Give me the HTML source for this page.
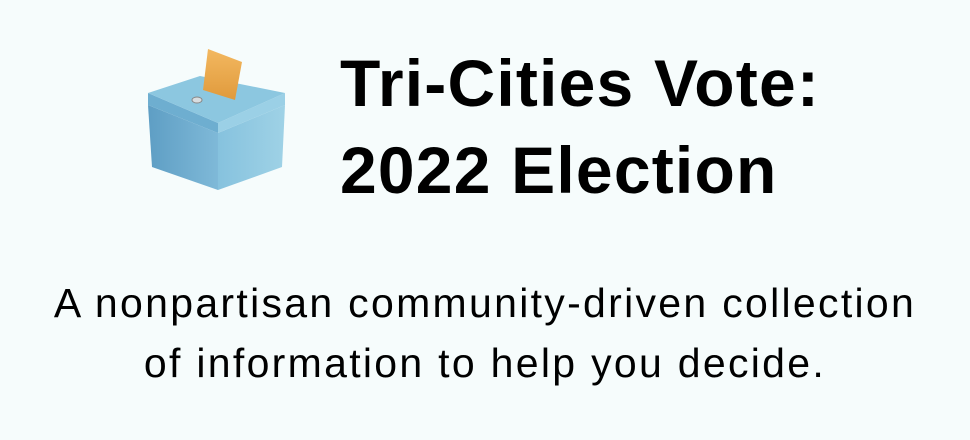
<!DOCTYPE html><html><head><style>
body{margin:0;width:970px;height:440px;background:#f6fcfc;overflow:hidden;font-family:"Liberation Sans",sans-serif;color:#000}
.t{position:absolute;left:340px;font-weight:bold;font-size:66px;line-height:1;letter-spacing:1.2px;white-space:nowrap}
.s{position:absolute;left:0;width:970px;text-align:center;font-size:41px;line-height:1;letter-spacing:2.3px;white-space:nowrap}
</style></head><body>
<svg style="position:absolute;left:0;top:0" width="320" height="220">
<defs>
<linearGradient id="f" x1="0" x2="1"><stop offset="0" stop-color="#5e9ec4"/><stop offset="1" stop-color="#7fb9d8"/></linearGradient>
<linearGradient id="r" x1="0" x2="1"><stop offset="0" stop-color="#86c2de"/><stop offset="1" stop-color="#9fd2e6"/></linearGradient>
<linearGradient id="p" x1="0" y1="0" x2="0" y2="1"><stop offset="0" stop-color="#f3b860"/><stop offset="1" stop-color="#e09a3c"/></linearGradient>
</defs>
<polygon points="148,105 218,133 218,190 152,167" fill="url(#f)"/>
<polygon points="218,133 285,105 282,167 218,190" fill="url(#r)"/>
<polygon points="148,93 218,123 218,133 148,105" fill="#6eaed0"/>
<polygon points="218,123 285,93 285,105 218,133" fill="#9bd0e6"/>
<polygon points="148,93 200,76 285,93 218,123" fill="#8cc7e0"/>
<polygon points="208,49 242,62 235,100 203,90" fill="url(#p)"/>
<ellipse cx="197" cy="100" rx="5" ry="3" fill="#d8dde0" stroke="#888" stroke-width="1"/>
</svg>
<div class="t" style="top:50px">Tri-Cities Vote:</div>
<div class="t" style="top:137px">2022 Election</div>
<div class="s" style="top:283px">A nonpartisan community-driven collection</div>
<div class="s" style="top:343px">of information to help you decide.</div>
</body></html>
